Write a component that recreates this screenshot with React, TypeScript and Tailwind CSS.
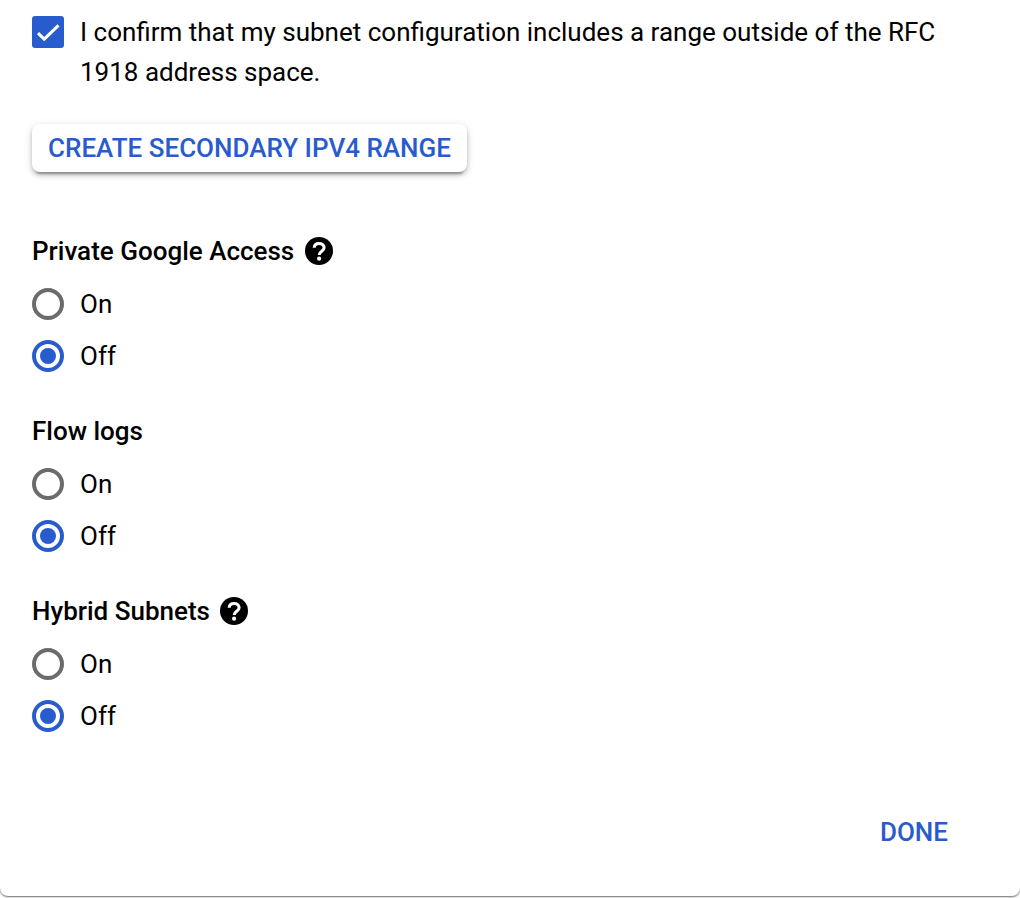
import React from "react";

function HelpIcon() {
  return (
    <svg viewBox="0 0 28 28" className="size-7 shrink-0" fill="none">
      <circle cx="14" cy="14" r="14" fill="#000" />
      <path
        d="M9.200 10.800C9.300 8.100 11.300 6.500 14 6.500c3 0 5.100 1.600 5.100 4.200 0 3.400-4.900 3.700-4.900 7.300"
        stroke="white"
        strokeWidth="3.100"
      />
      <circle cx="14.100" cy="21.700" r="2.100" fill="white" />
    </svg>
  );
}

function Radio({ label, selected = false }: { label: string; selected?: boolean }) {
  return (
    <label className="flex h-8 items-center gap-4">
      <span
        className={
          selected
            ? "flex size-8 items-center justify-center rounded-full border-4 border-[#285bcd]"
            : "flex size-8 items-center justify-center rounded-full border-4 border-[#6b6b6b]"
        }
      >
        {selected && <span className="size-4 rounded-full bg-[#285bcd]" />}
      </span>
      <span>{label}</span>
    </label>
  );
}

function RadioSection({ title, help = false }: { title: string; help?: boolean }) {
  return (
    <section className="h-[180px]">
      <h2 className="flex h-10 items-center gap-[10.500px] font-medium">
        {title}
        {help && <HelpIcon />}
      </h2>
      <div className="mt-[17px] flex flex-col gap-5">
        <Radio label="On" />
        <Radio label="Off" selected />
      </div>
    </section>
  );
}

export default function App() {
  return (
    <main className="flex h-[898px] w-[1020px] flex-col overflow-hidden bg-white font-[Roboto,sans-serif] text-[26px] leading-10 text-black">
      <div className="flex h-[896px] flex-col rounded-b-lg px-8 pt-3 shadow-[0_1px_2px_rgba(0,0,0,0.6)]">
        <div className="flex h-20 gap-4">
          <span className="mt-1 flex size-8 shrink-0 items-center justify-center rounded-[3px] bg-[#285bcd]">
            <svg viewBox="0 0 32 32" className="size-8" fill="none" stroke="white" strokeWidth="3">
              <path d="M6 17.200l6.200 6L26.500 9.300" />
            </svg>
          </span>
          <p className="w-[870px]">
            I confirm that my subnet configuration includes a range outside of the RFC 1918 address space.
          </p>
        </div>
        <button className="mt-8 h-12 w-[435px] shrink-0 rounded-lg bg-white text-center font-medium whitespace-nowrap text-[#285bcd] shadow-[0_6px_2px_-4px_rgba(0,0,0,0.25),0_3px_4px_rgba(0,0,0,0.22),0_2px_10px_rgba(0,0,0,0.12)]">
          CREATE SECONDARY IPV4 RANGE
        </button>
        <div className="mt-[59px]">
          <RadioSection title="Private Google Access" help />
          <RadioSection title="Flow logs" />
          <RadioSection title="Hybrid Subnets" help />
        </div>
        <button className="mt-[41px] mr-10 self-end font-medium text-[#285bcd]">DONE</button>
      </div>
    </main>
  );
}
